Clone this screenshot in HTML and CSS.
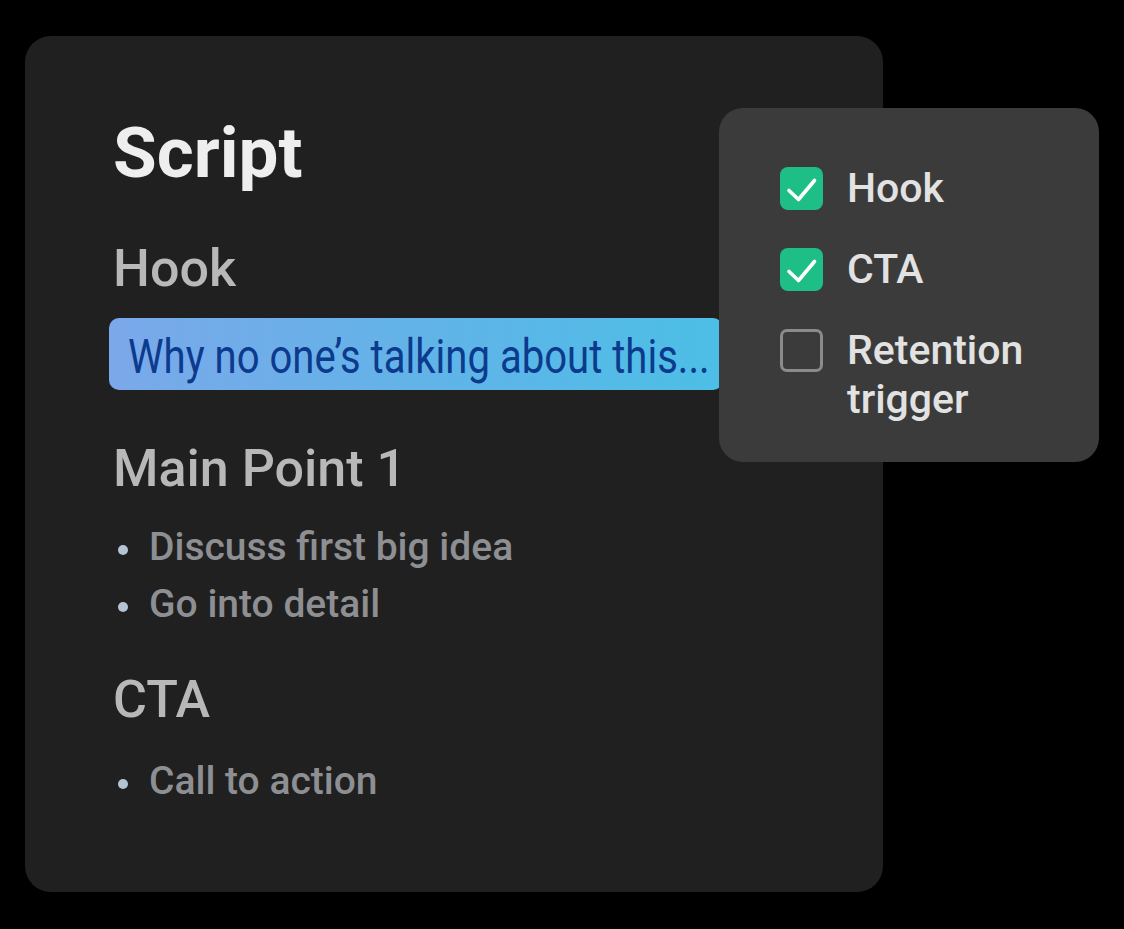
FILE: index.html
```html
<!DOCTYPE html>
<html>
	<head>
		<meta charset="utf-8">
		<meta name="viewport" content="width=device-width, initial-scale=1.0">
		<title>Script</title>
		<link rel="stylesheet" href="styles.css">
	</head>
	<body>

		<div class="stage">
			<div class="card">
				<h1 class="title">Script</h1>

				<h2 class="section hook">Hook</h2>
				<div class="highlight">
					<span class="highlight-text">Why no one’s talking about this...</span>
				</div>

				<h2 class="section main">Main Point 1</h2>
				<ul class="points">
					<li>Discuss first big idea</li>
					<li>Go into detail</li>
				</ul>

				<h2 class="section cta">CTA</h2>
				<ul class="points last">
					<li>Call to action</li>
				</ul>
			</div>

			<!-- 勾选清单 浮在卡片上面 -->
			<div class="checklist">
				<div class="item">
					<span class="box checked">
						<svg viewBox="0 0 43 43" width="43" height="43"><path d="M9 23.5 L18.5 32.5 L34.5 13.5" fill="none" stroke="#fff" stroke-width="3.6" stroke-linecap="round" stroke-linejoin="round"/></svg>
					</span>
					<span class="label">Hook</span>
				</div>
				<div class="item">
					<span class="box checked">
						<svg viewBox="0 0 43 43" width="43" height="43"><path d="M9 23.5 L18.5 32.5 L34.5 13.5" fill="none" stroke="#fff" stroke-width="3.6" stroke-linecap="round" stroke-linejoin="round"/></svg>
					</span>
					<span class="label">CTA</span>
				</div>
				<div class="item">
					<span class="box"></span>
					<span class="label">Retention<br>trigger</span>
				</div>
			</div>
		</div>

	</body>
</html>
```

FILE: styles.css
```css
body{
	margin: 0;
	background-color: #000;
	font-family: Roboto, "Noto Sans", "Liberation Sans", sans-serif;
}
.stage{
	position: relative;
	width: 1124px;
	height: 929px;
	padding: 36px 0 0 25px;
	box-sizing: border-box;
}

/* 左边的大卡片 */
.card{
	width: 858px;
	height: 856px;
	box-sizing: border-box;
	padding: 81px 0 0 88px;
	background-color: #202020;
	border-radius: 26px;
}
.title{
	margin: 0;
	font-size: 71px;
	line-height: 72px;
	font-weight: 700;
	color: #eeeeee;
}
.section{
	margin: 0;
	font-size: 52px;
	line-height: 60px;
	font-weight: 500;
	color: #b8b8b8;
}
.hook{
	margin-top: 50px;
}
.main{
	margin-top: 49px;
}
.cta{
	margin-top: 37px;
}

.highlight{
	width: 614px;
	height: 72px;
	margin: 19px 0 0 -4px;
	padding: 5px 0 0 19px;
	box-sizing: border-box;
	border-radius: 10px;
	background: linear-gradient(90deg, #7ba8ea 0%, #62b3e8 50%, #4cbfe6 100%);
	overflow: hidden;
	white-space: nowrap;
}
.highlight-text{
	display: inline-block;
	font-size: 48px;
	line-height: 67px;
	color: #0c3a8d;
	/* 原图的字是窄体 */
	transform: scaleX(0.835);
	transform-origin: left center;
}

.points{
	margin: 20px 0 0 0;
	padding: 0;
	list-style-type: none;
}
.points.last{
	margin-top: 23px;
}
.points li{
	position: relative;
	padding-left: 36px;
	font-size: 39px;
	line-height: 57px;
	font-weight: 500;
	color: #8e8f93;
}
.points li::before{
	content: '';
	position: absolute;
	left: 5px;
	top: 26px;
	width: 10px;
	height: 10px;
	border-radius: 50%;
	background-color: #b3c5d5;
}

/* 右上角的清单 */
.checklist{
	position: absolute;
	left: 719px;
	top: 108px;
	width: 380px;
	height: 354px;
	box-sizing: border-box;
	padding: 56px 0 0 61px;
	background-color: #3b3b3b;
	border-radius: 24px;
	display: flex;
	flex-direction: column;
	gap: 32px;
}
.item{
	display: flex;
	align-items: flex-start;
	gap: 24px;
}
.box{
	flex: none;
	width: 43px;
	height: 43px;
	margin-top: 3px;
	box-sizing: border-box;
	border: 3px solid #8b8b8b;
	border-radius: 7px;
}
.box.checked{
	border: none;
	border-radius: 8px;
	background-color: #1ebf87;
}
.box svg{
	display: block;
}
.label{
	font-size: 41px;
	line-height: 49px;
	font-weight: 500;
	color: #e2e2e2;
}
```
